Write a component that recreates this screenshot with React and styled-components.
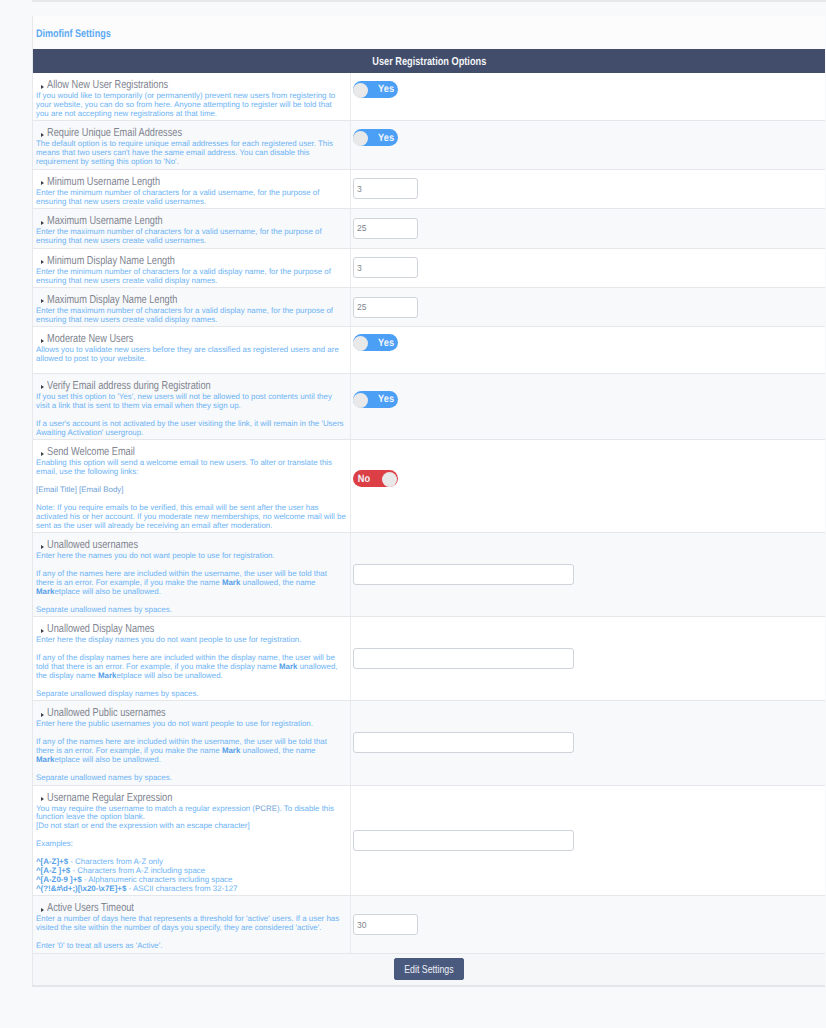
import React from 'react';
import styled, { createGlobalStyle } from 'styled-components';

const GlobalStyle = createGlobalStyle`
  html, body {
    margin: 0;
    padding: 0;
    background: #f8f9fa;
    overflow-x: hidden;
  }
  body {
    font-family: "Liberation Sans", Arial, sans-serif;
    text-rendering: geometricPrecision;
  }
`;

const Page = styled.div`
  width: 826px;
  height: 1028px;
  padding-left: 32px;
  box-sizing: border-box;
  overflow: hidden;
`;

const TopStrip = styled.div`
  height: 2px;
  background: #e6e8ea;
  margin-bottom: 14px;
`;

const Panel = styled.div`
  width: 793px;
  box-sizing: border-box;
  background: #fcfcfd;
  border-left: 1px solid #e6e8eb;
  border-bottom: 2px solid #e3e5e8;
`;

// the headings use a narrow face, there is none installed so squeeze the sans
const Narrow = styled.span`
  display: inline-block;
  white-space: nowrap;
  transform: scaleX(${p => p.$scale || 0.8});
  transform-origin: ${p => p.$origin || 'left'} center;
`;

const SettingsTitle = styled.h1`
  margin: 0;
  height: 33px;
  line-height: 36px;
  padding-left: 3px;
  font-size: 11px;
  font-weight: 700;
  color: #5aa9f2;
`;

const TableHead = styled.div`
  height: 24px;
  line-height: 26px;
  text-align: center;
  background: #414d6a;
  color: #f4f5f8;
  font-size: 11.5px;
  font-weight: 700;
`;

const Row = styled.div`
  display: grid;
  grid-template-columns: 318px 1fr;
  box-sizing: border-box;
  background: ${p => (p.$alt ? '#f8f9fb' : '#ffffff')};
  border-bottom: 1px solid #e5e7ea;
`;

const Info = styled.div`
  padding: 4px 3px 1.55px;
  border-right: 1px solid #e9ebee;
`;

const OptionTitle = styled.div`
  display: flex;
  align-items: center;
  box-sizing: border-box;
  height: 15px;
  padding: 1px 0 0 5px;
  font-size: 11.5px;
  color: #80848f;
`;

const Arrow = styled.span`
  flex: none;
  width: 0;
  height: 0;
  margin: 3px 3px 0 0;
  border-left: 3px solid #3c3f46;
  border-top: 2.5px solid transparent;
  border-bottom: 2.5px solid transparent;
`;

const Desc = styled.div`
  font-size: 7.92px;
  line-height: 8.93px;
  white-space: nowrap;
  color: #6cb3f5;

  b {
    font-weight: 700;
    color: #549fe8;
  }

  a {
    color: #6f9fd8;
    text-decoration: none;
  }
`;

const Control = styled.div`
  display: flex;
  align-items: center;
  padding: 0 0 0 2px;
`;

const ToggleWrap = styled.div`
  padding: 7px 0;
`;

const Toggle = styled.div`
  position: relative;
  display: flex;
  align-items: center;
  justify-content: ${p => (p.$on ? 'flex-end' : 'flex-start')};
  width: 45px;
  height: 17px;
  margin-bottom: 14.5px;
  padding: 0 3px 0 4px;
  box-sizing: border-box;
  border-radius: 9px;
  background: ${p => (p.$on ? '#4b9ff5' : '#dc3f45')};
  color: #f2f6fc;
  font-size: 10.5px;
  font-weight: 700;
`;

const Knob = styled.span`
  position: absolute;
  top: 2px;
  left: ${p => (p.$on ? '0' : '29px')};
  width: 15px;
  height: 15px;
  border-radius: 50%;
  background: #e9e9ea;
`;

const Field = styled.input`
  display: block;
  width: ${p => (p.$wide ? '221px' : '65px')};
  height: 21px;
  padding: 0 3px;
  box-sizing: border-box;
  background: #fff;
  border: 1px solid #cfd3da;
  border-radius: 3px;
  outline: none;
  font-family: "Liberation Sans", Arial, sans-serif;
  font-size: 8.5px;
  color: #80848c;
`;

const Footer = styled.div`
  display: flex;
  justify-content: center;
  align-items: center;
  height: 31px;
  background: #f6f7f8;
`;

const SubmitButton = styled.button`
  width: 70px;
  height: 22px;
  padding: 0;
  border: 1px solid #4a5a7e;
  border-radius: 2px;
  background: #4a5a7e;
  color: #eef0f5;
  font-family: "Liberation Sans", Arial, sans-serif;
  font-size: 11px;
`;

const Blank = () => <br />;

const options = [
  {
    title: 'Allow New User Registrations',
    toggle: true,
    desc: <>If you would like to temporarily (or permanently) prevent new users from registering to<br />your website, you can do so from here. Anyone attempting to register will be told that<br />you are not accepting new registrations at that time.</>,
  },
  {
    title: 'Require Unique Email Addresses',
    toggle: true,
    desc: <>The default option is to require unique email addresses for each registered user. This<br />means that two users can't have the same email address. You can disable this<br />requirement by setting this option to 'No'.</>,
  },
  {
    title: 'Minimum Username Length',
    value: '3',
    desc: <>Enter the minimum number of characters for a valid username, for the purpose of<br />ensuring that new users create valid usernames.</>,
  },
  {
    title: 'Maximum Username Length',
    value: '25',
    desc: <>Enter the maximum number of characters for a valid username, for the purpose of<br />ensuring that new users create valid usernames.</>,
  },
  {
    title: 'Minimum Display Name Length',
    value: '3',
    desc: <>Enter the minimum number of characters for a valid display name, for the purpose of<br />ensuring that new users create valid display names.</>,
  },
  {
    title: 'Maximum Display Name Length',
    value: '25',
    desc: <>Enter the maximum number of characters for a valid display name, for the purpose of<br />ensuring that new users create valid display names.</>,
  },
  {
    title: 'Moderate New Users',
    toggle: true,
    desc: <>Allows you to validate new users before they are classified as registered users and are<br />allowed to post to your website.</>,
  },
  {
    title: 'Verify Email address during Registration',
    toggle: true,
    desc: <>If you set this option to 'Yes', new users will not be allowed to post contents until they<br />visit a link that is sent to them via email when they sign up.<br /><Blank />If a user's account is not activated by the user visiting the link, it will remain in the 'Users<br />Awaiting Activation' usergroup.</>,
  },
  {
    title: 'Send Welcome Email',
    toggle: false,
    desc: <>Enabling this option will send a welcome email to new users. To alter or translate this<br />email, use the following links:<br /><Blank /><a>[Email Title]</a> <a>[Email Body]</a><br /><Blank />Note: If you require emails to be verified, this email will be sent after the user has<br />activated his or her account. If you moderate new memberships, no welcome mail will be<br />sent as the user will already be receiving an email after moderation.</>,
  },
  {
    title: 'Unallowed usernames',
    wide: true,
    desc: <>Enter here the names you do not want people to use for registration.<br /><Blank />If any of the names here are included within the username, the user will be told that<br />there is an error. For example, if you make the name <b>Mark</b> unallowed, the name<br /><b>Mark</b>etplace will also be unallowed.<br /><Blank />Separate unallowed names by spaces.</>,
  },
  {
    title: 'Unallowed Display Names',
    wide: true,
    desc: <>Enter here the display names you do not want people to use for registration.<br /><Blank />If any of the display names here are included within the display name, the user will be<br />told that there is an error. For example, if you make the display name <b>Mark</b> unallowed,<br />the display name <b>Mark</b>etplace will also be unallowed.<br /><Blank />Separate unallowed display names by spaces.</>,
  },
  {
    title: 'Unallowed Public usernames',
    wide: true,
    desc: <>Enter here the public usernames you do not want people to use for registration.<br /><Blank />If any of the names here are included within the username, the user will be told that<br />there is an error. For example, if you make the name <b>Mark</b> unallowed, the name<br /><b>Mark</b>etplace will also be unallowed.<br /><Blank />Separate unallowed names by spaces.</>,
  },
  {
    title: 'Username Regular Expression',
    wide: true,
    desc: <>You may require the username to match a regular expression (<a>PCRE</a>). To disable this<br />function leave the option blank.<br />[Do not start or end the expression with an escape character]<br /><Blank />Examples:<br /><Blank /><b>^[A-Z]+$</b> - Characters from A-Z only<br /><b>^[A-Z ]+$</b> - Characters from A-Z including space<br /><b>^[A-Z0-9 ]+$</b> - Alphanumeric characters including space<br /><b>^(?!&amp;#\d+;)[\x20-\x7E]+$</b> - ASCII characters from 32-127</>,
  },
  {
    title: 'Active Users Timeout',
    value: '30',
    desc: <>Enter a number of days here that represents a threshold for 'active' users. If a user has<br />visited the site within the number of days you specify, they are considered 'active'.<br /><Blank />Enter '0' to treat all users as 'Active'.</>,
  },
];

export default function App() {
  return (
    <Page>
      <GlobalStyle />
      <TopStrip />
      <Panel>
        <SettingsTitle><Narrow $scale={0.82}>Dimofinf Settings</Narrow></SettingsTitle>
        <TableHead><Narrow $origin="center">User Registration Options</Narrow></TableHead>
        {options.map((opt, index) => (
          <Row key={opt.title} $alt={index % 2 === 1}>
            <Info>
              <OptionTitle><Arrow /><Narrow>{opt.title}</Narrow></OptionTitle>
              <Desc>{opt.desc}</Desc>
            </Info>
            <Control>
              {opt.toggle !== undefined ? (
                <ToggleWrap>
                  <Toggle $on={opt.toggle}>
                    <Narrow $scale={0.88} $origin="center">{opt.toggle ? 'Yes' : 'No'}</Narrow>
                    <Knob $on={opt.toggle} />
                  </Toggle>
                </ToggleWrap>
              ) : (
                <Field $wide={opt.wide} defaultValue={opt.value || ''} />
              )}
            </Control>
          </Row>
        ))}
        <Footer>
          <SubmitButton><Narrow $origin="center">Edit Settings</Narrow></SubmitButton>
        </Footer>
      </Panel>
    </Page>
  );
}
